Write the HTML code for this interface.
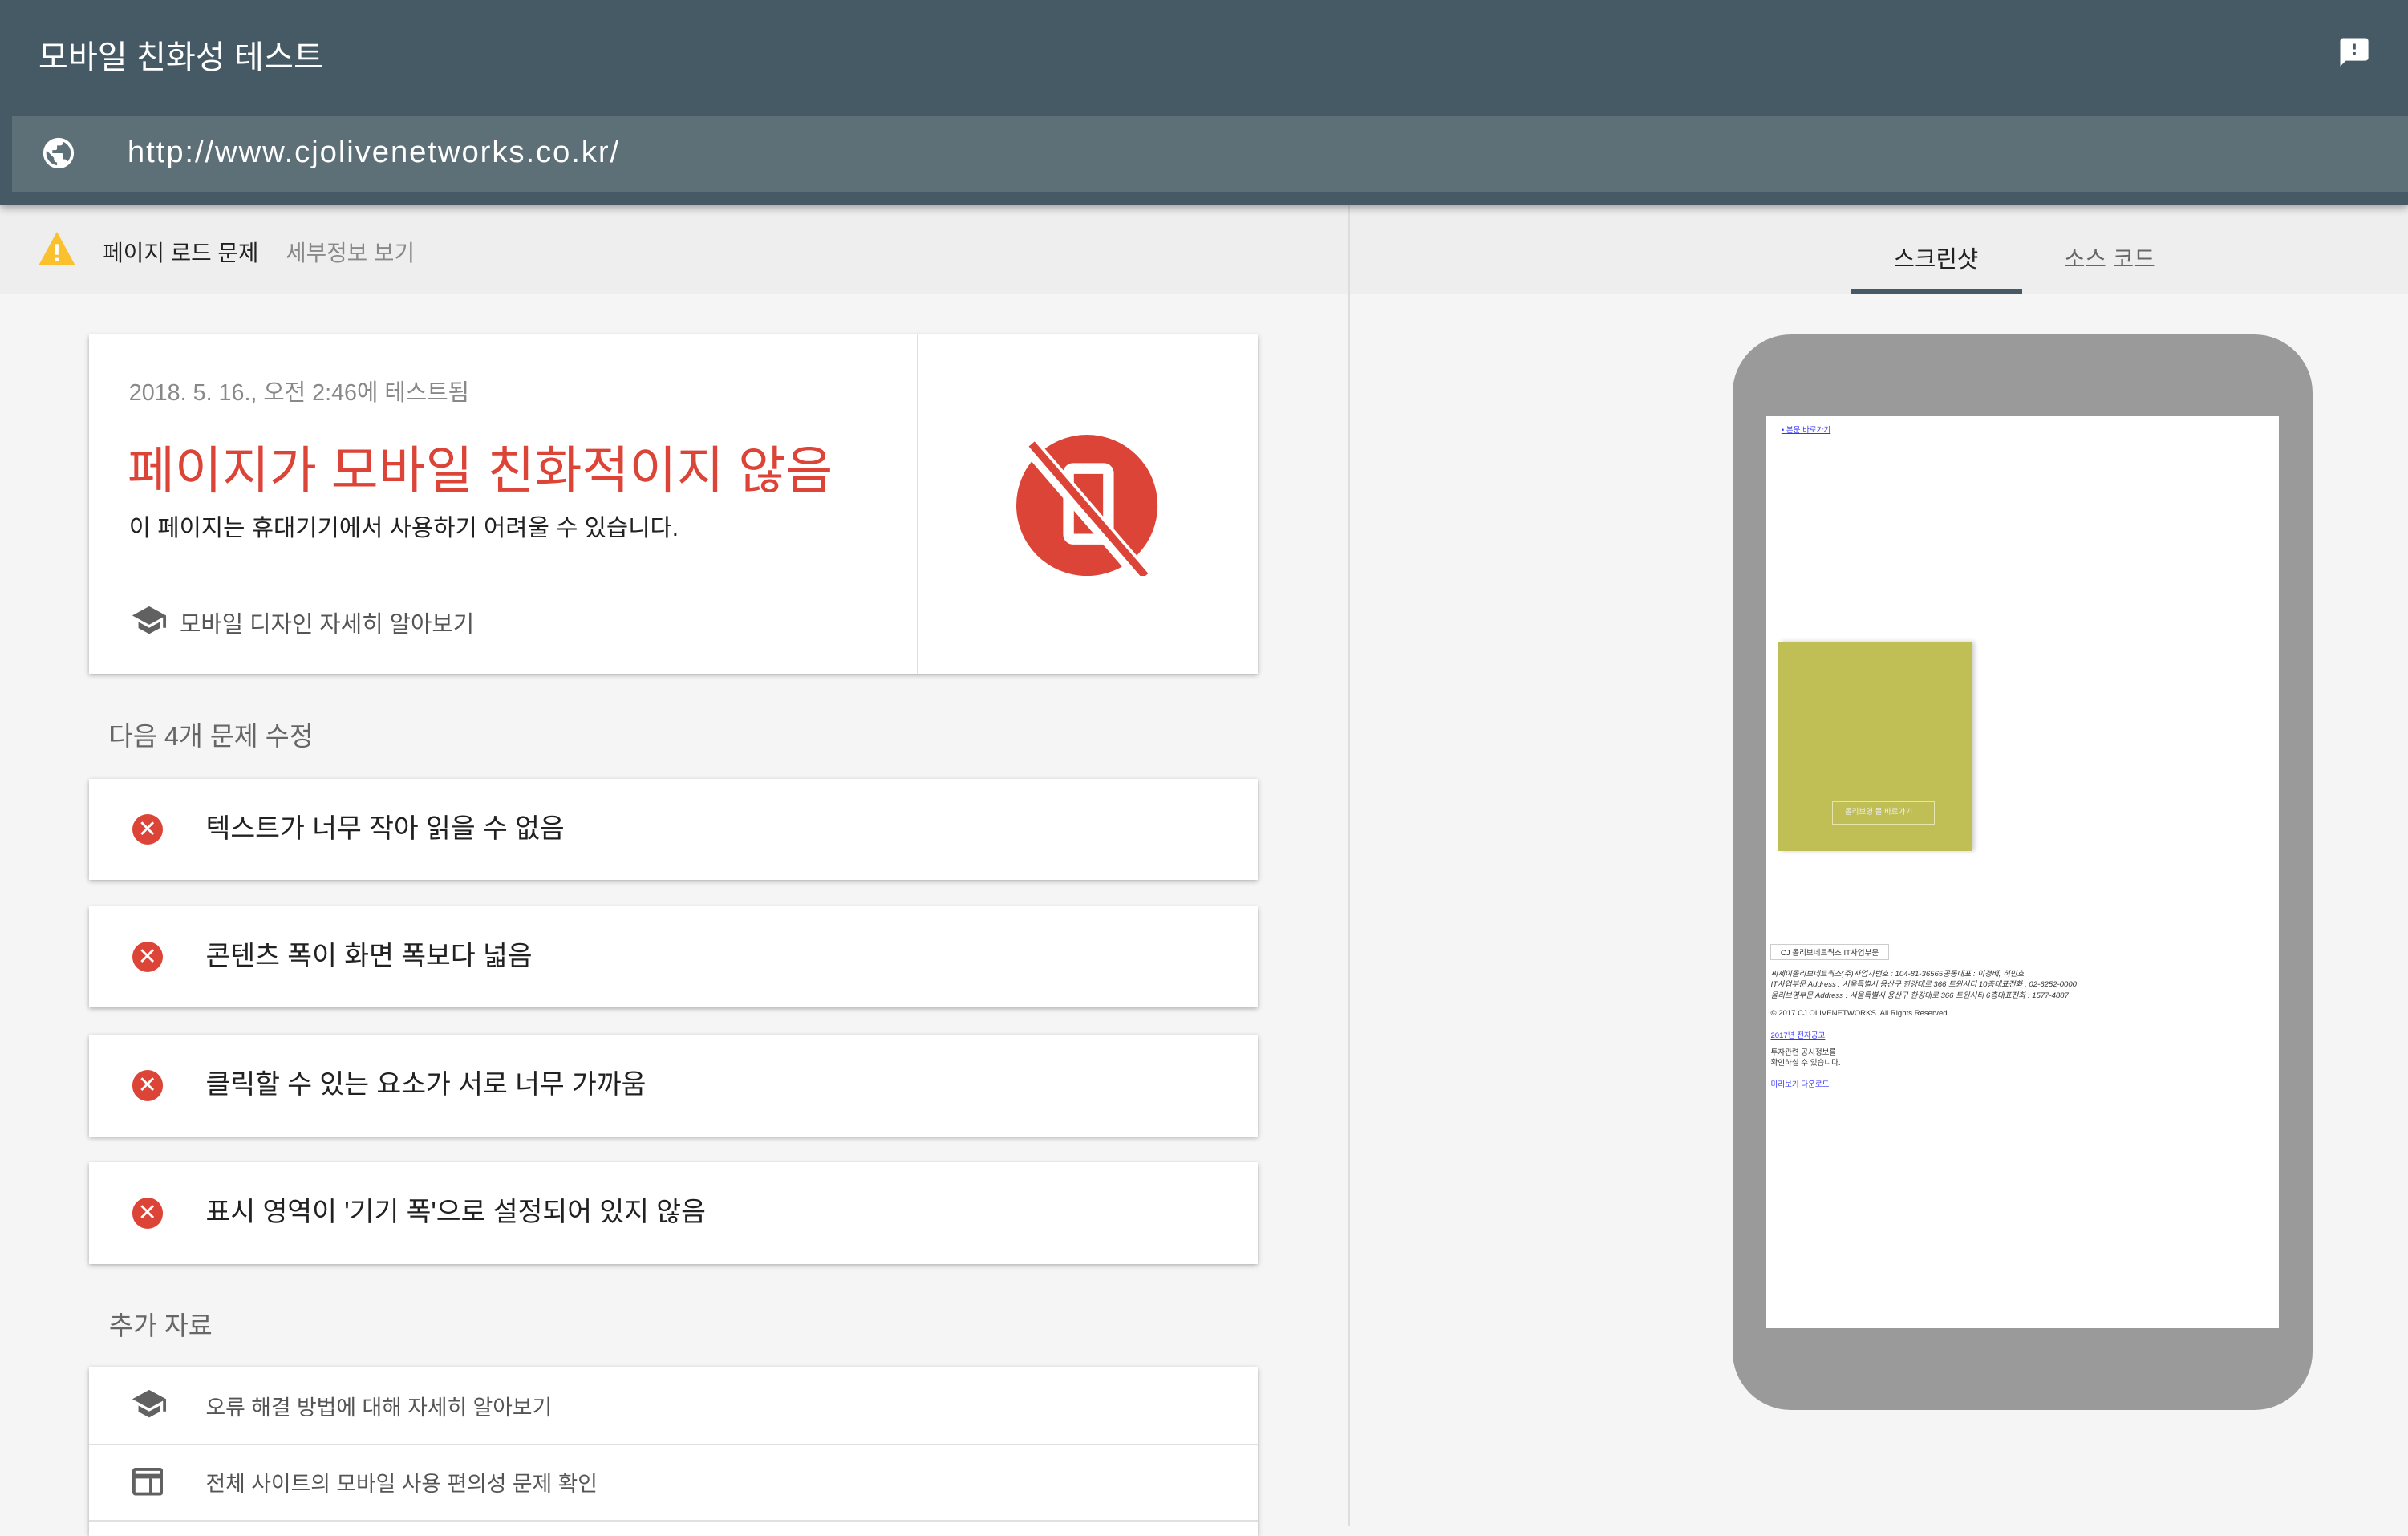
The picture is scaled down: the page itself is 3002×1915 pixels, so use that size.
<!DOCTYPE html>
<html><head><meta charset="utf-8"><style>
html{zoom:1.91454}
body{margin:0;width:1568px;height:994px;overflow:hidden;background:#f5f5f5;font-family:"Liberation Sans","Noto Sans CJK KR",sans-serif;position:relative}
.a{position:absolute}
.card{position:absolute;left:58px;width:761px;background:#fff;box-shadow:0 1px 3px rgba(0,0,0,.3)}
.iss{height:66px}
.iss .x{position:absolute;left:86px;top:23px;width:20px;height:20px;border-radius:50%;background:#db4437;color:#fff;font-size:15px;line-height:20px;text-align:center}
.iss .t{position:absolute;left:76px;top:0;line-height:66px;font-size:17.5px;color:#212121}
</style></head><body>
<div class="a" style="left:0;top:0;width:1568px;height:133px;background:#455a64;box-shadow:0 2px 5px rgba(0,0,0,.35);z-index:2">
 <div class="a" style="left:25px;top:20px;font-size:21px;color:#fff">모바일 친화성 테스트</div>
 <svg class="a" style="left:1522px;top:23px" width="22" height="22" viewBox="0 0 24 24"><path fill="#fff" d="M20 2H4a2 2 0 0 0-2 2v18l4-4h14a2 2 0 0 0 2-2V4a2 2 0 0 0-2-2zm-7 12h-2v-2h2v2zm0-4h-2V6h2v4z"/></svg>
 <div class="a" style="left:8px;top:75px;width:1560px;height:50px;background:#5e7077">
  <svg class="a" style="left:18px;top:13px" width="24" height="24" viewBox="0 0 24 24"><path fill="#fff" d="M12 2a10 10 0 1 0 0 20 10 10 0 0 0 0-20zm-1 17.9A8 8 0 0 1 4 12c0-.6.1-1.2.2-1.8L9 15v1c0 1.1.9 2 2 2v1.9zm6.9-2.5c-.3-.8-1-1.4-1.9-1.4h-1v-3c0-.6-.4-1-1-1H8v-2h2c.6 0 1-.4 1-1V7h2c1.1 0 2-.9 2-2v-.4a8 8 0 0 1 2.9 12.8z"/></svg>
  <div class="a" style="left:75px;top:13px;font-size:20px;color:#fff;letter-spacing:1px">http://www.cjolivenetworks.co.kr/</div>
 </div>
</div>
<div class="a" style="left:0;top:133px;width:1568px;height:58px;background:#eeeeee;border-bottom:1px solid #ddd"></div>
<div class="a" style="left:878px;top:133px;width:1px;height:861px;background:#ddd"></div>
<div class="a" style="left:879px;top:192px;width:689px;height:802px;background:#f5f5f5"></div>
<svg class="a" style="left:25px;top:151px" width="24" height="22" viewBox="0 0 24 22"><path fill="#fbc02d" d="M12 0L24 22H0z"/><rect x="11" y="8" width="2" height="7" fill="#fff"/><rect x="11" y="17" width="2" height="2" fill="#fff"/></svg>
<div class="a" style="left:67px;top:153px;font-size:14.5px;color:#212121">페이지 로드 문제</div>
<div class="a" style="left:186px;top:153px;font-size:14.5px;color:#888">세부정보 보기</div>
<div class="a" style="left:1233px;top:157px;font-size:15px;color:#212121">스크린샷</div>
<div class="a" style="left:1205px;top:188px;width:112px;height:3px;background:#455a64"></div>
<div class="a" style="left:1344px;top:157px;font-size:15px;color:#666">소스 코드</div>

<div class="card" style="top:218px;height:221px">
 <div class="a" style="left:539px;top:0;width:1px;height:221px;background:#e0e0e0"></div>
 <div class="a" style="left:26px;top:26px;font-size:15px;color:#888">2018. 5. 16., 오전 2:46에 테스트됨</div>
 <div class="a" style="left:25px;top:62px;font-size:33.5px;color:#db4437">페이지가 모바일 친화적이지 않음</div>
 <div class="a" style="left:26px;top:113px;font-size:15.5px;color:#212121">이 페이지는 휴대기기에서 사용하기 어려울 수 있습니다.</div>
 <svg class="a" style="left:27px;top:176px" width="24" height="20" viewBox="0 0 24 20"><path fill="#616161" d="M12 1L1 7l11 6 9-4.9V15h2V7zM5 11.2v4L12 19l7-3.8v-4L12 15z"/></svg>
 <div class="a" style="left:59px;top:177px;font-size:15px;color:#555">모바일 디자인 자세히 알아보기</div>
 <svg class="a" style="left:604px;top:65px" width="92" height="92" viewBox="0 0 92 92"><circle cx="46" cy="46" r="46" fill="#db4437"/><rect x="34" y="22" width="26" height="46" rx="3" fill="none" stroke="#fff" stroke-width="7"/><path d="M8 6L82 92" stroke="#fff" stroke-width="12"/><path d="M10 6L84 92" stroke="#db4437" stroke-width="5"/></svg>
</div>
<div class="a" style="left:71px;top:466px;font-size:17px;color:#666">다음 4개 문제 수정</div>
<div class="card iss" style="top:507px"><div class="x" style="left:28px">✕</div><div class="t">텍스트가 너무 작아 읽을 수 없음</div></div>
<div class="card iss" style="top:590px"><div class="x" style="left:28px">✕</div><div class="t">콘텐츠 폭이 화면 폭보다 넓음</div></div>
<div class="card iss" style="top:674px"><div class="x" style="left:28px">✕</div><div class="t">클릭할 수 있는 요소가 서로 너무 가까움</div></div>
<div class="card iss" style="top:757px"><div class="x" style="left:28px">✕</div><div class="t">표시 영역이 '기기 폭'으로 설정되어 있지 않음</div></div>
<div class="a" style="left:71px;top:850px;font-size:17px;color:#666">추가 자료</div>
<div class="card" style="top:890px;height:110px">
 <div class="a" style="left:0;top:50px;width:761px;height:1px;background:#e0e0e0"></div>
 <div class="a" style="left:0;top:100px;width:761px;height:1px;background:#e0e0e0"></div>
 <svg class="a" style="left:27px;top:14px" width="24" height="20" viewBox="0 0 24 20"><path fill="#616161" d="M12 1L1 7l11 6 9-4.9V15h2V7zM5 11.2v4L12 19l7-3.8v-4L12 15z"/></svg>
 <div class="a" style="left:76px;top:15px;font-size:14px;color:#555">오류 해결 방법에 대해 자세히 알아보기</div>
 <svg class="a" style="left:28px;top:66px" width="20" height="18" viewBox="0 0 20 18"><rect x="1" y="1" width="18" height="16" rx="1" fill="none" stroke="#616161" stroke-width="2"/><rect x="1" y="4" width="18" height="3" fill="#616161"/><rect x="11" y="7" width="2" height="10" fill="#616161"/></svg>
 <div class="a" style="left:76px;top:65px;font-size:14px;color:#555">전체 사이트의 모바일 사용 편의성 문제 확인</div>
</div>

<div class="a" style="left:1128px;top:218px;width:378px;height:700px;border-radius:38px;background:#9a9a9a">
 <div class="a" style="left:22px;top:53px;width:334px;height:594px;background:#fff;overflow:hidden;font-size:5px">
  <div class="a" style="left:10px;top:5px;color:#33f;text-decoration:underline">• 본문 바로가기</div>
  <div class="a" style="left:8px;top:147px;width:126px;height:136px;background:#c0bf55;box-shadow:2px 0 3px rgba(0,0,0,.2)">
   <div class="a" style="left:35px;top:104px;width:66px;height:14px;border:1px solid #e6e5b0;color:#eee;line-height:14px;text-align:center">올리브영 몰 바로가기 →</div>
  </div>
  <div class="a" style="left:3px;top:344px;border:1px solid #ccc;padding:1px 6px;color:#333">CJ 올리브네트웍스 IT사업부문</div>
  <div class="a" style="left:3px;top:360px;color:#333;font-style:italic;line-height:7px">씨제이올리브네트웍스(주)사업자번호 : 104-81-36565공동대표 : 이경배, 허민호<br>IT사업부문 Address : 서울특별시 용산구 한강대로 366 트윈시티 10층대표전화 : 02-6252-0000<br>올리브영부문 Address : 서울특별시 용산구 한강대로 366 트윈시티 6층대표전화 : 1577-4887</div>
  <div class="a" style="left:3px;top:386px;color:#333">© 2017 CJ OLIVENETWORKS. All Rights Reserved.</div>
  <div class="a" style="left:3px;top:399px;color:#33f;text-decoration:underline">2017년 전자공고</div>
  <div class="a" style="left:3px;top:411px;color:#333;line-height:7px">투자관련 공시정보를<br>확인하실 수 있습니다.</div>
  <div class="a" style="left:3px;top:431px;color:#33f;text-decoration:underline">미리보기 다운로드</div>
 </div>
</div>
</body></html>
